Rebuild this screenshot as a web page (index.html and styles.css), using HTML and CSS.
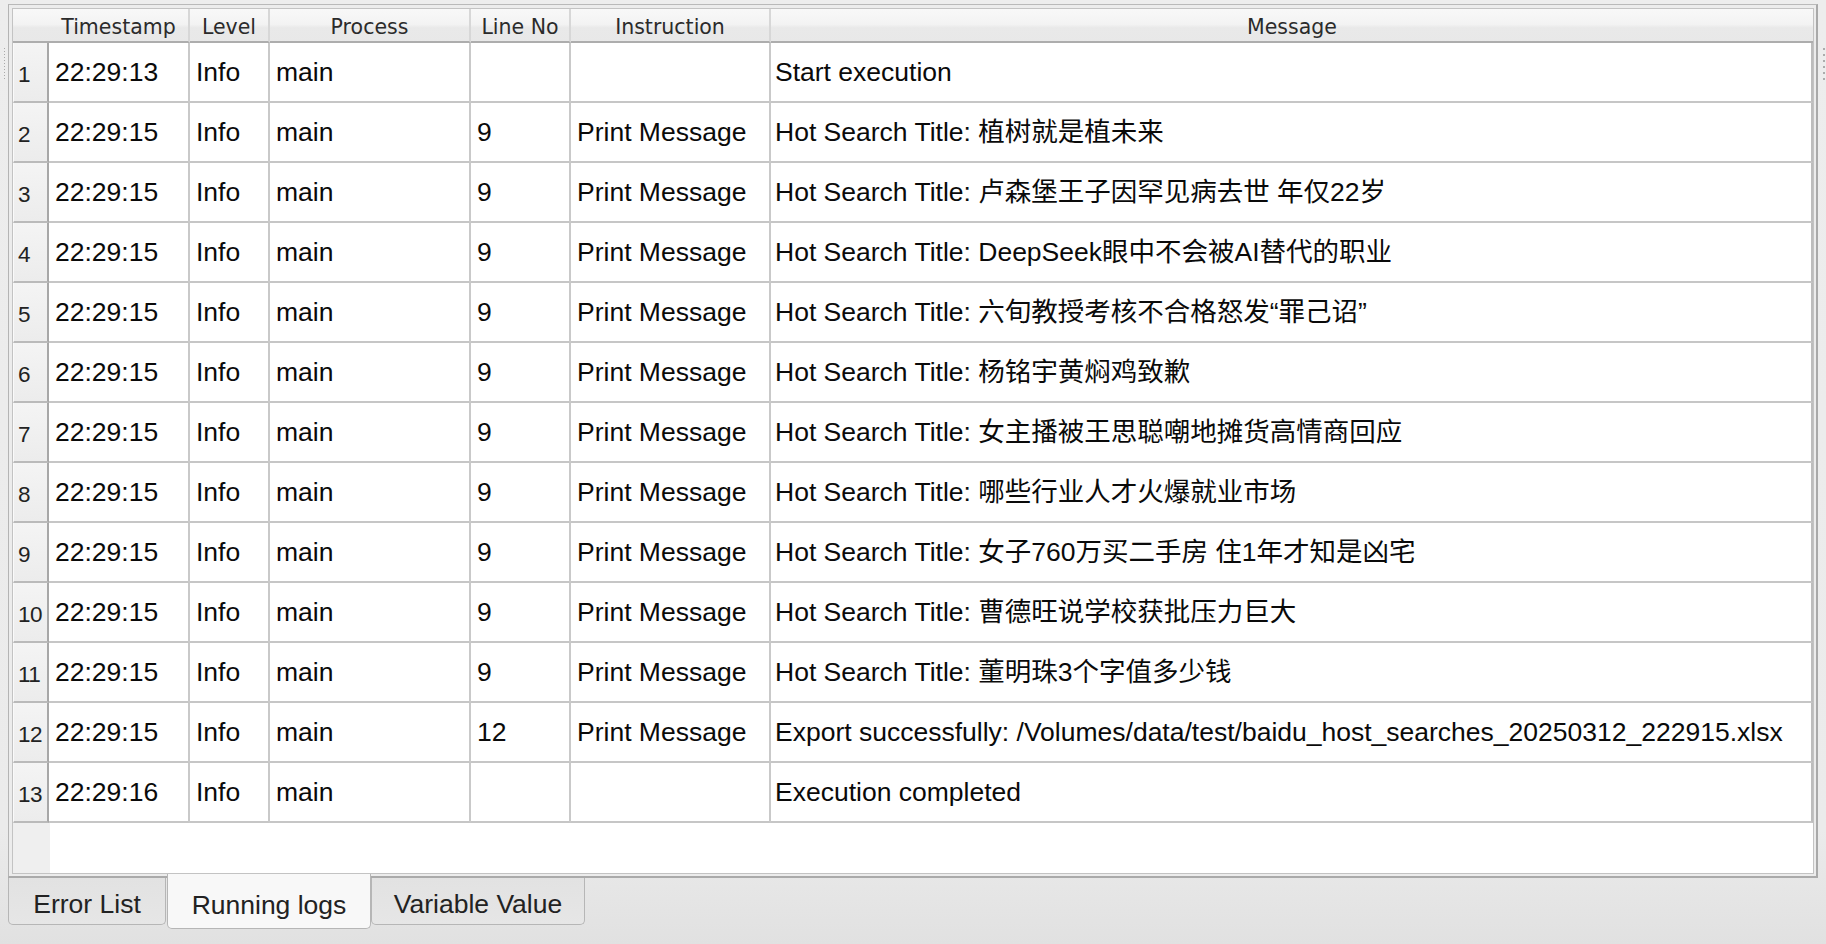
FILE: index.html
```html
<!DOCTYPE html>
<html>
<head>
<meta charset="utf-8">
<link rel="stylesheet" href="styles.css">
</head>
<body>
<div class="app">
  <div class="top">
    <div class="gutter gutter-left"><div class="grip grip-left"></div></div>
    <div class="frame">
      <div class="gridbox">
        <div class="row head">
          <div class="hc corner"></div>
          <div class="hc">Timestamp</div>
          <div class="hc">Level</div>
          <div class="hc">Process</div>
          <div class="hc">Line No</div>
          <div class="hc">Instruction</div>
          <div class="hc last">Message</div>
        </div>
        <div class="row"><div class="rn">1</div><div class="c">22:29:13</div><div class="c">Info</div><div class="c">main</div><div class="c"></div><div class="c"></div><div class="c last">Start execution</div></div>
        <div class="row"><div class="rn">2</div><div class="c">22:29:15</div><div class="c">Info</div><div class="c">main</div><div class="c">9</div><div class="c">Print Message</div><div class="c last">Hot Search Title: 植树就是植未来</div></div>
        <div class="row"><div class="rn">3</div><div class="c">22:29:15</div><div class="c">Info</div><div class="c">main</div><div class="c">9</div><div class="c">Print Message</div><div class="c last">Hot Search Title: 卢森堡王子因罕见病去世 年仅22岁</div></div>
        <div class="row"><div class="rn">4</div><div class="c">22:29:15</div><div class="c">Info</div><div class="c">main</div><div class="c">9</div><div class="c">Print Message</div><div class="c last">Hot Search Title: DeepSeek眼中不会被AI替代的职业</div></div>
        <div class="row"><div class="rn">5</div><div class="c">22:29:15</div><div class="c">Info</div><div class="c">main</div><div class="c">9</div><div class="c">Print Message</div><div class="c last">Hot Search Title: 六旬教授考核不合格怒发“罪己诏”</div></div>
        <div class="row"><div class="rn">6</div><div class="c">22:29:15</div><div class="c">Info</div><div class="c">main</div><div class="c">9</div><div class="c">Print Message</div><div class="c last">Hot Search Title: 杨铭宇黄焖鸡致歉</div></div>
        <div class="row"><div class="rn">7</div><div class="c">22:29:15</div><div class="c">Info</div><div class="c">main</div><div class="c">9</div><div class="c">Print Message</div><div class="c last">Hot Search Title: 女主播被王思聪嘲地摊货高情商回应</div></div>
        <div class="row"><div class="rn">8</div><div class="c">22:29:15</div><div class="c">Info</div><div class="c">main</div><div class="c">9</div><div class="c">Print Message</div><div class="c last">Hot Search Title: 哪些行业人才火爆就业市场</div></div>
        <div class="row"><div class="rn">9</div><div class="c">22:29:15</div><div class="c">Info</div><div class="c">main</div><div class="c">9</div><div class="c">Print Message</div><div class="c last">Hot Search Title: 女子760万买二手房 住1年才知是凶宅</div></div>
        <div class="row"><div class="rn">10</div><div class="c">22:29:15</div><div class="c">Info</div><div class="c">main</div><div class="c">9</div><div class="c">Print Message</div><div class="c last">Hot Search Title: 曹德旺说学校获批压力巨大</div></div>
        <div class="row"><div class="rn">11</div><div class="c">22:29:15</div><div class="c">Info</div><div class="c">main</div><div class="c">9</div><div class="c">Print Message</div><div class="c last">Hot Search Title: 董明珠3个字值多少钱</div></div>
        <div class="row"><div class="rn">12</div><div class="c">22:29:15</div><div class="c">Info</div><div class="c">main</div><div class="c">12</div><div class="c">Print Message</div><div class="c last">Export successfully: /Volumes/data/test/baidu_host_searches_20250312_222915.xlsx</div></div>
        <div class="row"><div class="rn">13</div><div class="c">22:29:16</div><div class="c">Info</div><div class="c">main</div><div class="c"></div><div class="c"></div><div class="c last">Execution completed</div></div>
        <div class="filler"><div class="filler-rn"></div><div class="filler-body"></div></div>
      </div>
    </div>
    <div class="gutter gutter-right"><div class="grip grip-right"></div></div>
  </div>
  <div class="tabs">
    <div class="tab tab-error">Error List</div>
    <div class="tab tab-active">Running logs</div>
    <div class="tab tab-var">Variable Value</div>
  </div>
</div>
</body>
</html>
```
FILE: styles.css
```css
html, body {
  margin: 0;
  padding: 0;
}
body {
  width: 1826px;
  height: 944px;
  overflow: hidden;
  background: linear-gradient(to bottom, #ededed 0%, #ebebeb 88%, #e1e1e1 100%);
  font-family: "Liberation Sans", Arial, "Noto Sans CJK SC", sans-serif;
}
.app {
  display: flex;
  flex-direction: column;
}
.top {
  display: flex;
  height: 878px;
}
.gutter {
  width: 8px;
  flex: none;
}
.grip {
  margin-top: 48px;
  width: 2px;
  height: 32px;
}
.grip-left {
  margin-left: 4px;
  width: 1px;
  background: repeating-linear-gradient(to bottom, #a9a9a9 0 1px, transparent 1px 3px);
}
.grip-right {
  margin-left: 5px;
  background: repeating-linear-gradient(to bottom, #acacac 0 2px, transparent 2px 6px);
}
.frame {
  box-sizing: border-box;
  margin-top: 4px;
  width: 1810px;
  height: 874px;
  border-top: 1px solid #b9b9b9;
  border-left: 1px solid #b4b4b4;
  border-right: 2px solid #a9a9a9;
  border-bottom: 2px solid #aaaaaa;
  padding: 3px 2px 2px 3px;
  background: #ececec;
}
.gridbox {
  box-sizing: border-box;
  width: 1802px;
  height: 866px;
  border: 1px solid #c3c3c3;
  background: #ffffff;
  display: flex;
  flex-direction: column;
  overflow: hidden;
}
.row {
  display: grid;
  grid-template-columns: 36px 141px 80px 201px 100px 200px 1042px;
  height: 60px;
  flex: none;
}
.row.head {
  height: 34px;
  background: linear-gradient(to bottom, #f8f8f8 0%, #f3f3f3 45%, #e9e9e9 55%, #e8e8e8 100%);
}
.hc {
  box-sizing: border-box;
  border-bottom: 2px solid #adadad;
  border-right: 2px solid #d7d7d7;
  font-family: "DejaVu Sans", "Liberation Sans", sans-serif;
  font-size: 20.5px;
  line-height: 24px;
  color: #2b2b2b;
  display: flex;
  align-items: center;
  justify-content: center;
  padding-top: 4px;
  white-space: nowrap;
}
.hc.corner {
  border-right: none;
}
.hc.last {
  border-right: none;
}
.c {
  box-sizing: border-box;
  border-right: 2px solid #c9c9c9;
  border-bottom: 2px solid #c6c6c6;
  font-size: 26.5px;
  line-height: 30px;
  color: #0a0a0a;
  display: flex;
  align-items: center;
  padding-left: 6px;
  white-space: nowrap;
  overflow: hidden;
}
.c.last {
  border-right: 2px solid #bcbcbc;
  padding-left: 4px;
}
.rn {
  box-sizing: border-box;
  background: linear-gradient(to bottom, #f4f4f4 0%, #ececec 100%);
  border-left: 1px solid #fafafa;
  border-right: 2px solid #a7a7a7;
  border-bottom: 2px solid #bababa;
  font-size: 22.5px;
  line-height: 26px;
  color: #222;
  display: flex;
  align-items: center;
  padding-left: 4px;
  padding-top: 5px;
  letter-spacing: -0.5px;
}
.filler {
  display: flex;
  flex: 1;
}
.filler-rn {
  width: 37px;
  background: #efefef;
}
.filler-body {
  flex: 1;
  background: #fff;
}
.tabs {
  display: flex;
  align-items: flex-start;
  padding-left: 8px;
  margin-top: -4px;
}
.tab {
  box-sizing: border-box;
  height: 47px;
  margin-top: 4px;
  border: 1.5px solid #b6b6b6;
  border-top: none;
  border-radius: 0 0 5px 5px;
  background: linear-gradient(to bottom, #e2e2e2, #e6e6e6);
  font-size: 26.5px;
  line-height: 30px;
  color: #222;
  display: flex;
  align-items: center;
  justify-content: center;
  white-space: nowrap;
}
.tab-error {
  width: 158px;
  padding-top: 5px;
}
.tab-active {
  width: 204px;
  height: 55px;
  margin-top: 0;
  margin-left: 1px;
  background: #f8f8f8;
  position: relative;
  z-index: 1;
  padding-top: 7px;
}
.tab-var {
  width: 214px;
  padding-top: 5px;
}
```
